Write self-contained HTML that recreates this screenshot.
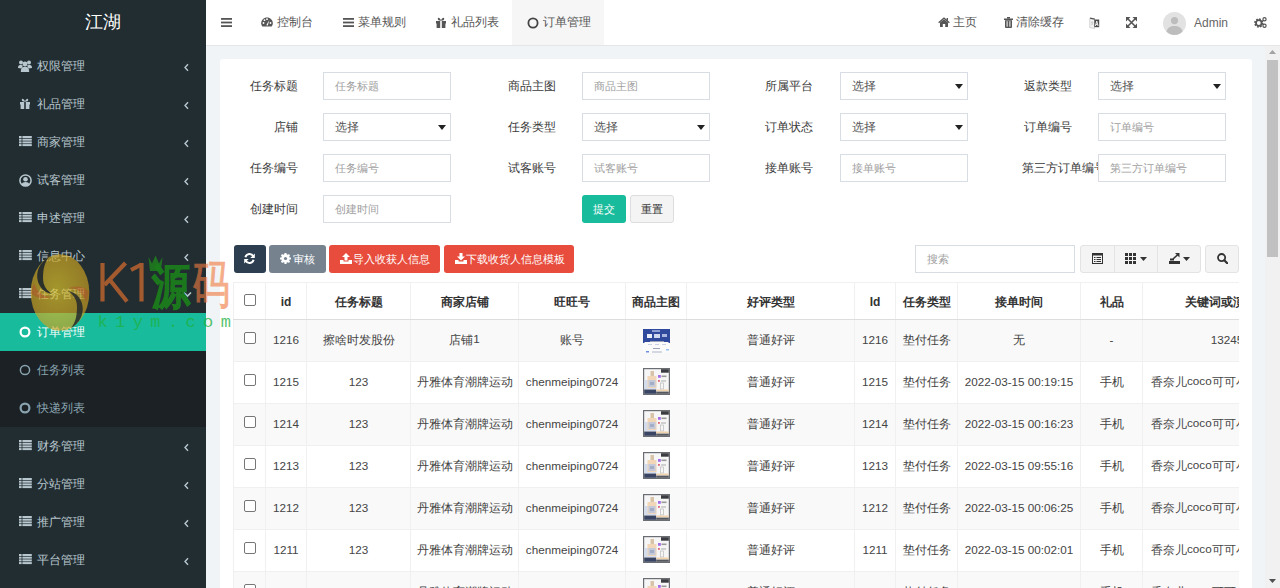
<!DOCTYPE html><html><head><meta charset="utf-8"><style>*{box-sizing:border-box;margin:0;padding:0}
html,body{width:1280px;height:588px;overflow:hidden;background:#f1f4f6;font-family:"Liberation Sans",sans-serif;font-size:12px;color:#333;position:relative}
.abs{position:absolute}
svg{display:block}
#side{position:absolute;left:0;top:0;width:206px;height:588px;background:#222d32;overflow:hidden}
#logo{position:absolute;left:0;top:0;width:206px;height:45px;line-height:45px;text-align:center;color:#fff;font-size:18px}
.mi{position:absolute;left:0;width:206px;height:38px;color:#b8c7ce;font-size:12px}
.mi .ic{position:absolute;left:19px;top:13px}
.mi .ic.ci{left:19px;top:13px}
.mi .tx{position:absolute;left:37px;top:0;line-height:38px;white-space:nowrap}
.mi .ar{position:absolute;left:183px;top:16px}
.mi .ar.dn{left:183px;top:16px}
.subwrap{position:absolute;left:0;width:206px;height:114px;background:#1b2125}
.sb2 .tx{color:#8aa4af}
.act{background:#18bc9c}
.act .tx{color:#fff}
#wm{position:absolute;left:0;top:0}
#hdr{position:absolute;left:206px;top:0;width:1074px;height:46px;background:#fff;border-bottom:1px solid #e4e6e8}
.hn{position:absolute;top:0;height:45px;line-height:45px;color:#555;font-size:12px;white-space:nowrap}
#panel{position:absolute;left:220px;top:59px;width:1032px;height:540px;background:#fff;border-radius:3px}
.lbl{position:absolute;height:28px;line-height:28px;font-size:11.7px;color:#3a3a3a;white-space:nowrap}
.inp{position:absolute;width:128px;height:28px;border:1px solid #d8dce3;background:#fff;font-size:11px;color:#a0a0a0;line-height:26px;padding-left:11px;white-space:nowrap;overflow:hidden}
.inp.sel{color:#555;font-size:12px}
.sel .cr{position:absolute;right:4px;top:11px;width:0;height:0;border-left:4px solid transparent;border-right:4px solid transparent;border-top:5px solid #222}
.btn{position:absolute;height:28px;line-height:28px;border-radius:3px;text-align:center;color:#fff;font-size:11px;white-space:nowrap}
#sb{position:absolute;left:1265px;top:46px;width:15px;height:542px;background:#f1f1f1}
#thumb{position:absolute;left:2px;top:14px;width:11px;height:197px;background:#c1c1c1}
#tbl{position:absolute;left:233px;top:282px;width:1006px;height:306px;overflow:hidden;background:#fff}
table{border-collapse:collapse;table-layout:fixed;width:1078px;font-size:12px;color:#444}
th{color:#333}
td,th{border:1px solid #f0f0f0;text-align:center;white-space:nowrap;overflow:hidden;padding:0 4px;vertical-align:middle}
th{height:37px;font-weight:bold;border-bottom:1px solid #ddd;border-top:1px solid #f0f0f0;padding-top:2px}
th .cb{position:relative;top:-3px}
td .cb{position:relative;top:-2px}
td{height:42px;font-size:11.7px;padding-bottom:2px}
td svg{margin:0 auto}
tr.g td{background:#f9f9f9}
.cb{display:inline-block;width:12px;height:12px;border:1px solid #767676;border-radius:2px;background:#fff;vertical-align:middle}

.cj{position:relative;top:1px}
td:last-child{padding:0 8px 2px}
th:last-child{padding:2px 8px 0}
</style></head><body><div id="side">
<div id="logo">江湖</div>
<div class="mi" style="top:47px"><div class="ic" style="left:18px"><svg width="14" height="12" viewBox="0 0 14 12" ><circle cx="3" cy="2.6" r="2" fill="#b8c7ce"/><circle cx="11" cy="2.6" r="2" fill="#b8c7ce"/><path d="M0 8 C0 5.5 1.2 5 3 5 C4 5 4.6 5.3 5 5.6 L3.5 8.5 Z" fill="#b8c7ce"/><path d="M14 8 C14 5.5 12.8 5 11 5 C10 5 9.4 5.3 9 5.6 L10.5 8.5 Z" fill="#b8c7ce"/><circle cx="7" cy="4" r="2.4" fill="#b8c7ce"/><path d="M2.8 12 C2.8 8 4.5 6.8 7 6.8 C9.5 6.8 11.2 8 11.2 12 Z" fill="#b8c7ce"/></svg></div><div class="tx">权限管理</div><div class="ar"><svg width="7" height="9" viewBox="0 0 7 9" ><path d="M5 1.2 L2 4.5 L5 7.8" fill="none" stroke="#b8c7ce" stroke-width="1.4"/></svg></div></div>
<div class="mi" style="top:85px"><div class="ic" style=""><svg width="12" height="11" viewBox="0 0 12 11" ><path d="M1 4h10v2.5H1z M1.6 6.5h8.8V11H1.6z" fill="#b8c7ce"/><rect x="5.2" y="3.6" width="1.6" height="7.4" fill="#222d32"/><path d="M6 3.8 C4 3.8 2.5 3 2.8 1.6 C3.1 0.2 5 0.6 6 3.6 C7 0.6 8.9 0.2 9.2 1.6 C9.5 3 8 3.8 6 3.8Z" fill="#b8c7ce"/></svg></div><div class="tx">礼品管理</div><div class="ar"><svg width="7" height="9" viewBox="0 0 7 9" ><path d="M5 1.2 L2 4.5 L5 7.8" fill="none" stroke="#b8c7ce" stroke-width="1.4"/></svg></div></div>
<div class="mi" style="top:123px"><div class="ic" style=""><svg width="13" height="11" viewBox="0 0 13 11" ><rect x="0" y="0" width="2.6" height="2" fill="#b8c7ce"/><rect x="3.4" y="0" width="9.4" height="2" fill="#b8c7ce"/><rect x="0" y="2.7" width="2.6" height="2" fill="#b8c7ce"/><rect x="3.4" y="2.7" width="9.4" height="2" fill="#b8c7ce"/><rect x="0" y="5.4" width="2.6" height="2" fill="#b8c7ce"/><rect x="3.4" y="5.4" width="9.4" height="2" fill="#b8c7ce"/><rect x="0" y="8.1" width="2.6" height="2" fill="#b8c7ce"/><rect x="3.4" y="8.1" width="9.4" height="2" fill="#b8c7ce"/></svg></div><div class="tx">商家管理</div><div class="ar"><svg width="7" height="9" viewBox="0 0 7 9" ><path d="M5 1.2 L2 4.5 L5 7.8" fill="none" stroke="#b8c7ce" stroke-width="1.4"/></svg></div></div>
<div class="mi" style="top:161px"><div class="ic" style=""><svg width="13" height="13" viewBox="0 0 13 13" ><circle cx="6.5" cy="6.5" r="5.6" fill="none" stroke="#b8c7ce" stroke-width="1.5"/><circle cx="6.5" cy="5.2" r="2.3" fill="#b8c7ce"/><path d="M2.6 10.4 C3.2 8.8 4.6 8.1 6.5 8.1 C8.4 8.1 9.8 8.8 10.4 10.4 C9.4 11.5 8 12 6.5 12 C5 12 3.6 11.5 2.6 10.4Z" fill="#b8c7ce"/></svg></div><div class="tx">试客管理</div><div class="ar"><svg width="7" height="9" viewBox="0 0 7 9" ><path d="M5 1.2 L2 4.5 L5 7.8" fill="none" stroke="#b8c7ce" stroke-width="1.4"/></svg></div></div>
<div class="mi" style="top:199px"><div class="ic" style=""><svg width="13" height="11" viewBox="0 0 13 11" ><rect x="0" y="0" width="2.6" height="2" fill="#b8c7ce"/><rect x="3.4" y="0" width="9.4" height="2" fill="#b8c7ce"/><rect x="0" y="2.7" width="2.6" height="2" fill="#b8c7ce"/><rect x="3.4" y="2.7" width="9.4" height="2" fill="#b8c7ce"/><rect x="0" y="5.4" width="2.6" height="2" fill="#b8c7ce"/><rect x="3.4" y="5.4" width="9.4" height="2" fill="#b8c7ce"/><rect x="0" y="8.1" width="2.6" height="2" fill="#b8c7ce"/><rect x="3.4" y="8.1" width="9.4" height="2" fill="#b8c7ce"/></svg></div><div class="tx">申述管理</div><div class="ar"><svg width="7" height="9" viewBox="0 0 7 9" ><path d="M5 1.2 L2 4.5 L5 7.8" fill="none" stroke="#b8c7ce" stroke-width="1.4"/></svg></div></div>
<div class="mi" style="top:237px"><div class="ic" style=""><svg width="13" height="11" viewBox="0 0 13 11" ><rect x="0" y="0" width="2.6" height="2" fill="#b8c7ce"/><rect x="3.4" y="0" width="9.4" height="2" fill="#b8c7ce"/><rect x="0" y="2.7" width="2.6" height="2" fill="#b8c7ce"/><rect x="3.4" y="2.7" width="9.4" height="2" fill="#b8c7ce"/><rect x="0" y="5.4" width="2.6" height="2" fill="#b8c7ce"/><rect x="3.4" y="5.4" width="9.4" height="2" fill="#b8c7ce"/><rect x="0" y="8.1" width="2.6" height="2" fill="#b8c7ce"/><rect x="3.4" y="8.1" width="9.4" height="2" fill="#b8c7ce"/></svg></div><div class="tx">信息中心</div><div class="ar"><svg width="7" height="9" viewBox="0 0 7 9" ><path d="M5 1.2 L2 4.5 L5 7.8" fill="none" stroke="#b8c7ce" stroke-width="1.4"/></svg></div></div>
<div class="mi" style="top:275px"><div class="ic" style=""><svg width="13" height="11" viewBox="0 0 13 11" ><rect x="0" y="0" width="2.6" height="2" fill="#b8c7ce"/><rect x="3.4" y="0" width="9.4" height="2" fill="#b8c7ce"/><rect x="0" y="2.7" width="2.6" height="2" fill="#b8c7ce"/><rect x="3.4" y="2.7" width="9.4" height="2" fill="#b8c7ce"/><rect x="0" y="5.4" width="2.6" height="2" fill="#b8c7ce"/><rect x="3.4" y="5.4" width="9.4" height="2" fill="#b8c7ce"/><rect x="0" y="8.1" width="2.6" height="2" fill="#b8c7ce"/><rect x="3.4" y="8.1" width="9.4" height="2" fill="#b8c7ce"/></svg></div><div class="tx">任务管理</div><div class="ar dn"><svg width="9" height="7" viewBox="0 0 9 7" ><path d="M1 1.5 L4.5 5 L8 1.5" fill="none" stroke="#b8c7ce" stroke-width="1.6"/></svg></div></div>
<div class="subwrap" style="top:313px">
<div class="mi act" style="top:0px"><div class="ic ci"><svg width="12" height="12" viewBox="0 0 12 12" ><circle cx="6.0" cy="6.0" r="4.4" fill="none" stroke="#fff" stroke-width="2.2"/></svg></div><div class="tx">订单管理</div></div>
<div class="mi sb2" style="top:38px"><div class="ic ci"><svg width="12" height="12" viewBox="0 0 12 12" ><circle cx="6.0" cy="6.0" r="4.6" fill="none" stroke="#8aa4af" stroke-width="1.5"/></svg></div><div class="tx">任务列表</div></div>
<div class="mi sb2" style="top:76px"><div class="ic ci"><svg width="12" height="12" viewBox="0 0 12 12" ><circle cx="6.0" cy="6.0" r="4.4" fill="none" stroke="#8aa4af" stroke-width="2.2"/></svg></div><div class="tx">快递列表</div></div>
</div>
<div class="mi" style="top:427px"><div class="ic"><svg width="13" height="11" viewBox="0 0 13 11" ><rect x="0" y="0" width="2.6" height="2" fill="#b8c7ce"/><rect x="3.4" y="0" width="9.4" height="2" fill="#b8c7ce"/><rect x="0" y="2.7" width="2.6" height="2" fill="#b8c7ce"/><rect x="3.4" y="2.7" width="9.4" height="2" fill="#b8c7ce"/><rect x="0" y="5.4" width="2.6" height="2" fill="#b8c7ce"/><rect x="3.4" y="5.4" width="9.4" height="2" fill="#b8c7ce"/><rect x="0" y="8.1" width="2.6" height="2" fill="#b8c7ce"/><rect x="3.4" y="8.1" width="9.4" height="2" fill="#b8c7ce"/></svg></div><div class="tx">财务管理</div><div class="ar"><svg width="7" height="9" viewBox="0 0 7 9" ><path d="M5 1.2 L2 4.5 L5 7.8" fill="none" stroke="#b8c7ce" stroke-width="1.4"/></svg></div></div>
<div class="mi" style="top:465px"><div class="ic"><svg width="13" height="11" viewBox="0 0 13 11" ><rect x="0" y="0" width="2.6" height="2" fill="#b8c7ce"/><rect x="3.4" y="0" width="9.4" height="2" fill="#b8c7ce"/><rect x="0" y="2.7" width="2.6" height="2" fill="#b8c7ce"/><rect x="3.4" y="2.7" width="9.4" height="2" fill="#b8c7ce"/><rect x="0" y="5.4" width="2.6" height="2" fill="#b8c7ce"/><rect x="3.4" y="5.4" width="9.4" height="2" fill="#b8c7ce"/><rect x="0" y="8.1" width="2.6" height="2" fill="#b8c7ce"/><rect x="3.4" y="8.1" width="9.4" height="2" fill="#b8c7ce"/></svg></div><div class="tx">分站管理</div><div class="ar"><svg width="7" height="9" viewBox="0 0 7 9" ><path d="M5 1.2 L2 4.5 L5 7.8" fill="none" stroke="#b8c7ce" stroke-width="1.4"/></svg></div></div>
<div class="mi" style="top:503px"><div class="ic"><svg width="13" height="11" viewBox="0 0 13 11" ><rect x="0" y="0" width="2.6" height="2" fill="#b8c7ce"/><rect x="3.4" y="0" width="9.4" height="2" fill="#b8c7ce"/><rect x="0" y="2.7" width="2.6" height="2" fill="#b8c7ce"/><rect x="3.4" y="2.7" width="9.4" height="2" fill="#b8c7ce"/><rect x="0" y="5.4" width="2.6" height="2" fill="#b8c7ce"/><rect x="3.4" y="5.4" width="9.4" height="2" fill="#b8c7ce"/><rect x="0" y="8.1" width="2.6" height="2" fill="#b8c7ce"/><rect x="3.4" y="8.1" width="9.4" height="2" fill="#b8c7ce"/></svg></div><div class="tx">推广管理</div><div class="ar"><svg width="7" height="9" viewBox="0 0 7 9" ><path d="M5 1.2 L2 4.5 L5 7.8" fill="none" stroke="#b8c7ce" stroke-width="1.4"/></svg></div></div>
<div class="mi" style="top:541px"><div class="ic"><svg width="13" height="11" viewBox="0 0 13 11" ><rect x="0" y="0" width="2.6" height="2" fill="#b8c7ce"/><rect x="3.4" y="0" width="9.4" height="2" fill="#b8c7ce"/><rect x="0" y="2.7" width="2.6" height="2" fill="#b8c7ce"/><rect x="3.4" y="2.7" width="9.4" height="2" fill="#b8c7ce"/><rect x="0" y="5.4" width="2.6" height="2" fill="#b8c7ce"/><rect x="3.4" y="5.4" width="9.4" height="2" fill="#b8c7ce"/><rect x="0" y="8.1" width="2.6" height="2" fill="#b8c7ce"/><rect x="3.4" y="8.1" width="9.4" height="2" fill="#b8c7ce"/></svg></div><div class="tx">平台管理</div><div class="ar"><svg width="7" height="9" viewBox="0 0 7 9" ><path d="M5 1.2 L2 4.5 L5 7.8" fill="none" stroke="#b8c7ce" stroke-width="1.4"/></svg></div></div>
</div>
<div id="hdr">
<div class="abs" style="left:15px;top:18px"><svg width="11" height="9" viewBox="0 0 11 9" ><rect x="0" y="0" width="11" height="1.8" fill="#555"/><rect x="0" y="3.6" width="11" height="1.8" fill="#555"/><rect x="0" y="7.2" width="11" height="1.8" fill="#555"/></svg></div>
<div class="abs" style="left:55px;top:17px"><svg width="12" height="10" viewBox="0 0 12 10" ><path d="M6 0.5 C2.7 0.5 0.2 3 0.2 6.3 C0.2 7.6 0.6 8.7 1.3 9.6 L10.7 9.6 C11.4 8.7 11.8 7.6 11.8 6.3 C11.8 3 9.3 0.5 6 0.5Z" fill="#555"/><circle cx="2.5" cy="6" r="0.9" fill="#fff"/><circle cx="3.5" cy="3.2" r="0.9" fill="#fff"/><circle cx="6" cy="2.2" r="0.9" fill="#fff"/><circle cx="9.5" cy="6" r="0.9" fill="#fff"/><path d="M5.3 8.2 L8.3 3 L6.8 8.6Z" fill="#fff"/></svg></div><div class="hn" style="left:71px">控制台</div>
<div class="abs" style="left:137px;top:18px"><svg width="11" height="9" viewBox="0 0 11 9" ><rect x="0" y="0" width="11" height="1.8" fill="#555"/><rect x="0" y="3.6" width="11" height="1.8" fill="#555"/><rect x="0" y="7.2" width="11" height="1.8" fill="#555"/></svg></div><div class="hn" style="left:152px">菜单规则</div>
<div class="abs" style="left:229px;top:17px"><svg width="12" height="11" viewBox="0 0 12 11" ><path d="M1 4h10v2.5H1z M1.6 6.5h8.8V11H1.6z" fill="#555"/><rect x="5.2" y="3.6" width="1.6" height="7.4" fill="#fff"/><path d="M6 3.8 C4 3.8 2.5 3 2.8 1.6 C3.1 0.2 5 0.6 6 3.6 C7 0.6 8.9 0.2 9.2 1.6 C9.5 3 8 3.8 6 3.8Z" fill="#555"/></svg></div><div class="hn" style="left:245px">礼品列表</div>
<div class="abs" style="left:306px;top:0;width:92px;height:45px;background:#f6f6f6"></div>
<div class="abs" style="left:321px;top:17px"><svg width="12" height="12" viewBox="0 0 12 12" ><circle cx="6.0" cy="6.0" r="4.6" fill="none" stroke="#444" stroke-width="1.8"/></svg></div><div class="hn" style="left:337px">订单管理</div>
<div class="abs" style="left:732px;top:17px"><svg width="12" height="10" viewBox="0 0 12 10" ><path d="M6 0.3 L11.8 5.3 L10.9 6.2 L6 2 L1.1 6.2 L0.2 5.3Z" fill="#555"/><path d="M2 5.5 L6 2.2 L10 5.5 V10 H7.2 V7 H4.8 V10 H2Z" fill="#555"/><rect x="8.6" y="1" width="1.4" height="2.6" fill="#555"/></svg></div><div class="hn" style="left:747px">主页</div>
<div class="abs" style="left:798px;top:17px"><svg width="9" height="11" viewBox="0 0 9 11" ><rect x="0" y="1.5" width="9" height="1.5" fill="#555"/><rect x="3" y="0" width="3" height="1.6" fill="#555"/><path d="M1 3.2 H8 V10 Q8 11 7 11 H2 Q1 11 1 10Z" fill="#555"/><rect x="2.6" y="4.2" width="1" height="5.5" fill="#fff"/><rect x="5.4" y="4.2" width="1" height="5.5" fill="#fff"/></svg></div><div class="hn" style="left:810px">清除缓存</div>
<div class="abs" style="left:883px;top:17px"><svg width="11" height="12" viewBox="0 0 11 12" ><path d="M0.8 1.5 L5.5 2.3 V11.5 L0.8 10.6Z" fill="#f4f4f4" stroke="#c9c9c9" stroke-width="0.8"/><path d="M1 1.2 L5.8 2.2" stroke="#555" stroke-width="1.2"/><path d="M5.3 2.5 H10.2 V10.2 H5.3Z" fill="#4a4a4a"/><path d="M6.4 9 L7.75 4 L9.1 9 M6.9 7.4 H8.6" stroke="#fff" stroke-width="0.9" fill="none"/><path d="M2 5 H4.3 M2.6 5 C2.9 6.8 3.5 7.6 4.3 8.2 M3.8 5 C3.5 6.8 2.9 7.6 2 8.2" stroke="#bbb" stroke-width="0.6" fill="none"/></svg></div>
<div class="abs" style="left:920px;top:17px"><svg width="11" height="11" viewBox="0 0 11 11" ><path d="M1.8 1.8 L9.2 9.2 M9.2 1.8 L1.8 9.2" stroke="#555" stroke-width="1.6"/><path d="M0 0 H4.5 L0 4.5Z M11 0 V4.5 L6.5 0Z M0 11 V6.5 L4.5 11Z M11 11 H6.5 L11 6.5Z" fill="#555"/></svg></div>
<div class="abs" style="left:957px;top:12px"><svg width="23" height="23" viewBox="0 0 23 23" ><circle cx="11.5" cy="11.5" r="11.5" fill="#e2e2e2"/><circle cx="11.5" cy="8.6" r="3.6" fill="#bdbdbd"/><path d="M3.5 19.5 C4.5 15.5 7.5 14 11.5 14 C15.5 14 18.5 15.5 19.5 19.5 C17.5 21.7 14.7 23 11.5 23 C8.3 23 5.5 21.7 3.5 19.5Z" fill="#bdbdbd"/></svg></div><div class="hn" style="left:988px;top:1px;color:#666;font-size:12px">Admin</div>
<div class="abs" style="left:1048px;top:17px"><svg width="13" height="11" viewBox="0 0 13 11" ><circle cx="4.8" cy="6" r="3.6" fill="none" stroke="#555" stroke-width="2.2" stroke-dasharray="1.6 1.2"/><circle cx="4.8" cy="6" r="2.8" fill="none" stroke="#555" stroke-width="1.8"/><circle cx="10.5" cy="2.2" r="1.6" fill="none" stroke="#555" stroke-width="1.2"/><circle cx="10.5" cy="8.8" r="1.6" fill="none" stroke="#555" stroke-width="1.2"/></svg></div>
</div>
<div id="sb"><div class="abs" style="left:4px;top:4px;transform:rotate(180deg)"><svg width="7" height="4" viewBox="0 0 7 4" ><path d="M0 0 H7 L3.5 4Z" fill="#a3a3a3"/></svg></div><div id="thumb"></div><div class="abs" style="left:4px;top:533px"><svg width="7" height="4" viewBox="0 0 7 4" ><path d="M0 0 H7 L3.5 4Z" fill="#505050"/></svg></div></div>
<div id="panel"></div>
<div class="lbl" style="right:982px;top:72px">任务标题</div>
<div class="inp" style="left:323px;top:72px">任务标题</div>
<div class="lbl" style="right:724px;top:72px">商品主图</div>
<div class="inp" style="left:582px;top:72px">商品主图</div>
<div class="lbl" style="right:467px;top:72px">所属平台</div>
<div class="inp sel" style="left:840px;top:72px">选择<span class="cr"></span></div>
<div class="lbl" style="right:208px;top:72px">返款类型</div>
<div class="inp sel" style="left:1098px;top:72px">选择<span class="cr"></span></div>
<div class="lbl" style="right:982px;top:113px">店铺</div>
<div class="inp sel" style="left:323px;top:113px">选择<span class="cr"></span></div>
<div class="lbl" style="right:724px;top:113px">任务类型</div>
<div class="inp sel" style="left:582px;top:113px">选择<span class="cr"></span></div>
<div class="lbl" style="right:467px;top:113px">订单状态</div>
<div class="inp sel" style="left:840px;top:113px">选择<span class="cr"></span></div>
<div class="lbl" style="right:208px;top:113px">订单编号</div>
<div class="inp" style="left:1098px;top:113px">订单编号</div>
<div class="lbl" style="right:982px;top:154px">任务编号</div>
<div class="inp" style="left:323px;top:154px">任务编号</div>
<div class="lbl" style="right:724px;top:154px">试客账号</div>
<div class="inp" style="left:582px;top:154px">试客账号</div>
<div class="lbl" style="right:467px;top:154px">接单账号</div>
<div class="inp" style="left:840px;top:154px">接单账号</div>
<div class="lbl" style="left:1022px;top:154px">第三方订单编号</div>
<div class="inp" style="left:1098px;top:154px">第三方订单编号</div>
<div class="lbl" style="right:982px;top:195px">创建时间</div>
<div class="inp" style="left:323px;top:195px">创建时间</div>
<div class="btn" style="left:582px;top:195px;width:44px;background:#18bc9c">提交</div>
<div class="btn" style="left:630px;top:195px;width:44px;background:#f4f4f4;border:1px solid #ddd;color:#333;line-height:26px">重置</div>
<div class="btn" style="left:234px;top:245px;width:32px;background:#2c3e50"><div class="abs" style="left:10px;top:8px"><svg width="11" height="11" viewBox="0 0 11 11" ><path d="M9.3 3.2 A4.3 4.3 0 0 0 1.4 4.3" fill="none" stroke="#fff" stroke-width="2"/><path d="M10.8 0.5 V5 H6.3Z" fill="#fff"/><path d="M1.7 7.8 A4.3 4.3 0 0 0 9.6 6.7" fill="none" stroke="#fff" stroke-width="2"/><path d="M0.2 10.5 V6 H4.7Z" fill="#fff"/></svg></div></div>
<div class="btn" style="left:269px;top:245px;width:57px;background:#76838f"><div class="abs" style="left:11px;top:8px"><svg width="11" height="11" viewBox="0 0 11 11" ><circle cx="9.80" cy="5.50" r="1.3" fill="#fff"/><circle cx="8.54" cy="8.54" r="1.3" fill="#fff"/><circle cx="5.50" cy="9.80" r="1.3" fill="#fff"/><circle cx="2.46" cy="8.54" r="1.3" fill="#fff"/><circle cx="1.20" cy="5.50" r="1.3" fill="#fff"/><circle cx="2.46" cy="2.46" r="1.3" fill="#fff"/><circle cx="5.50" cy="1.20" r="1.3" fill="#fff"/><circle cx="8.54" cy="2.46" r="1.3" fill="#fff"/><circle cx="5.5" cy="5.5" r="3.9" fill="#fff"/><circle cx="5.5" cy="5.5" r="1.6" fill="#76838f"/></svg></div><span class="abs" style="left:24px;top:0">审核</span></div>
<div class="btn" style="left:329px;top:245px;width:111px;background:#e74c3c"><div class="abs" style="left:11px;top:8px"><svg width="12" height="11" viewBox="0 0 12 11" ><path d="M6 0 L10 4 H7.5 V7.5 H4.5 V4 H2Z" fill="#fff"/><path d="M0 7 H3.5 V8.5 H8.5 V7 H12 V11 H0Z" fill="#fff"/></svg></div><span class="abs" style="left:24px;top:0">导入收获人信息</span></div>
<div class="btn" style="left:444px;top:245px;width:130px;background:#e74c3c"><div class="abs" style="left:11px;top:8px"><svg width="12" height="11" viewBox="0 0 12 11" ><path d="M4.5 0 H7.5 V3.5 H10 L6 7.5 L2 3.5 H4.5Z" fill="#fff"/><path d="M0 7 H3.5 V8.5 H8.5 V7 H12 V11 H0Z" fill="#fff"/></svg></div><span class="abs" style="left:22px;top:0">下载收货人信息模板</span></div>
<div class="inp" style="left:915px;top:245px;width:160px;padding-left:11px">搜索</div>
<div class="btn grp" style="left:1080px;top:245px;width:121px;background:#f4f4f4;border:1px solid #e3e3e3"><div class="abs" style="left:11px;top:7px"><svg width="11" height="11" viewBox="0 0 11 11" ><rect x="0.5" y="0.5" width="10" height="10" fill="none" stroke="#333" stroke-width="1"/><rect x="0.5" y="0.5" width="10" height="2" fill="#333"/><rect x="2" y="4" width="1.5" height="1" fill="#333"/><rect x="4.5" y="4" width="4.5" height="1" fill="#333"/><rect x="2" y="6" width="1.5" height="1" fill="#333"/><rect x="4.5" y="6" width="4.5" height="1" fill="#333"/><rect x="2" y="8" width="1.5" height="1" fill="#333"/><rect x="4.5" y="8" width="4.5" height="1" fill="#333"/></svg></div><div class="abs" style="left:33px;top:0;width:1px;height:26px;background:#e3e3e3"></div><div class="abs" style="left:44px;top:7px"><svg width="11" height="11" viewBox="0 0 11 11" ><rect x="0" y="0" width="3" height="3" fill="#333"/><rect x="0" y="4" width="3" height="3" fill="#333"/><rect x="0" y="8" width="3" height="3" fill="#333"/><rect x="4" y="0" width="3" height="3" fill="#333"/><rect x="4" y="4" width="3" height="3" fill="#333"/><rect x="4" y="8" width="3" height="3" fill="#333"/><rect x="8" y="0" width="3" height="3" fill="#333"/><rect x="8" y="4" width="3" height="3" fill="#333"/><rect x="8" y="8" width="3" height="3" fill="#333"/></svg></div><div class="abs" style="left:59px;top:11px"><svg width="7" height="4" viewBox="0 0 7 4" ><path d="M0 0 H7 L3.5 4Z" fill="#333"/></svg></div><div class="abs" style="left:76px;top:0;width:1px;height:26px;background:#e3e3e3"></div><div class="abs" style="left:88px;top:7px"><svg width="11" height="11" viewBox="0 0 11 11" ><rect x="0" y="8" width="11" height="3" fill="#333"/><path d="M1 7.5 L1 5.5 L5 5.5 L5 7.5Z" fill="#333"/><path d="M4 6 L9 1.5" stroke="#333" stroke-width="1.6"/><path d="M6 0 H10.5 V4.5Z" fill="#333"/></svg></div><div class="abs" style="left:102px;top:11px"><svg width="7" height="4" viewBox="0 0 7 4" ><path d="M0 0 H7 L3.5 4Z" fill="#333"/></svg></div></div>
<div class="btn" style="left:1205px;top:245px;width:34px;background:#f4f4f4;border:1px solid #e3e3e3"><div class="abs" style="left:11px;top:7px"><svg width="11" height="11" viewBox="0 0 11 11" ><circle cx="4.6" cy="4.6" r="3.6" fill="none" stroke="#333" stroke-width="1.8"/><path d="M7.3 7.3 L10.3 10.3" stroke="#333" stroke-width="2.2" stroke-linecap="round"/></svg></div></div>
<div id="tbl"><table><colgroup><col style="width:32px"><col style="width:41px"><col style="width:104px"><col style="width:108px"><col style="width:107px"><col style="width:61px"><col style="width:168px"><col style="width:41px"><col style="width:62px"><col style="width:123px"><col style="width:62px"><col style="width:169px"></colgroup>
<tr><th><span class="cb"></span></th><th>id</th><th>任务标题</th><th>商家店铺</th><th>旺旺号</th><th>商品主图</th><th>好评类型</th><th>Id</th><th>任务类型</th><th>接单时间</th><th>礼品</th><th>关键词或演示图</th></tr>
<tr class="g"><td><span class="cb"></span></td><td>1216</td><td><span class="cj">擦啥时发股份</span></td><td><span class="cj">店铺</span>1</td><td><span class="cj">账号</span></td><td><svg width="27" height="27" viewBox="0 0 27 27"><rect width="27" height="27" fill="#fbfbfc"/><rect x="0" y="3" width="27" height="13" fill="#2f4a9c"/><rect x="0" y="13" width="1.5" height="4" fill="#2f4a9c"/><rect x="25.5" y="13" width="1.5" height="4" fill="#2f4a9c"/><rect x="4" y="8" width="5" height="4" fill="#e9edf7"/><rect x="11" y="8" width="6" height="4" fill="#cfd8ee"/><rect x="19" y="8" width="5" height="3" fill="#aab8e0"/><rect x="9" y="4" width="8" height="2" fill="#8d9fd4"/><rect x="7" y="15" width="14" height="1" fill="#9aa3b8"/><rect x="5" y="18" width="4" height="1" fill="#c9d0e6"/><rect x="12" y="18" width="4" height="1" fill="#c9d0e6"/><rect x="19" y="18" width="4" height="1" fill="#c9d0e6"/><rect x="10" y="22" width="7" height="1" fill="#9aa3b8"/><rect x="3" y="25" width="3" height="1.5" fill="#6d8fe0"/><rect x="9" y="25.5" width="10" height="1" fill="#b0b6c4"/><rect x="23" y="23" width="3" height="1.5" fill="#9cc0ee"/></svg></td><td><span class="cj">普通好评</span></td><td>1216</td><td><span class="cj">垫付任务</span></td><td><span class="cj">无</span></td><td>-</td><td>13245</td></tr>
<tr class=""><td><span class="cb"></span></td><td>1215</td><td>123</td><td><span class="cj">丹雅体育潮牌运动</span></td><td>chenmeiping0724</td><td><svg width="27" height="27" viewBox="0 0 27 27"><rect width="27" height="27" fill="#6a6d72"/><rect x="1.2" y="1.2" width="24.6" height="24.6" fill="#f6f6f7"/><rect x="1.2" y="12" width="12" height="9" fill="#d3dced"/><rect x="7.5" y="3" width="3.5" height="5" fill="#d8c3a8"/><rect x="4.5" y="8" width="9" height="12" fill="#f1d6b8"/><rect x="5.5" y="12" width="7" height="7" fill="#c3c9db"/><rect x="7" y="14" width="4" height="3" fill="#a3adc6"/><rect x="18" y="1.2" width="7.8" height="3.5" fill="#3a3c41"/><rect x="15" y="7" width="2.8" height="2.8" fill="#a66be6"/><rect x="18.5" y="7.5" width="5" height="1.6" fill="#999"/><rect x="15" y="12" width="1.8" height="1.8" fill="#e06070"/><rect x="18" y="12.5" width="5" height="1" fill="#aaa"/><rect x="17.5" y="15" width="3" height="6" fill="none" stroke="#bbb" stroke-width="0.7"/><rect x="1.2" y="21.5" width="12" height="4.3" fill="#394563"/><rect x="13.2" y="21.5" width="12.6" height="1.8" fill="#f0d2ab"/><rect x="13.2" y="23.6" width="12.6" height="2.2" fill="#55585e"/></svg></td><td><span class="cj">普通好评</span></td><td>1215</td><td><span class="cj">垫付任务</span></td><td>2022-03-15 00:19:15</td><td><span class="cj">手机</span></td><td><span class="cj">香奈儿</span>coco<span class="cj">可可小姐淡香水精华</span></td></tr>
<tr class="g"><td><span class="cb"></span></td><td>1214</td><td>123</td><td><span class="cj">丹雅体育潮牌运动</span></td><td>chenmeiping0724</td><td><svg width="27" height="27" viewBox="0 0 27 27"><rect width="27" height="27" fill="#6a6d72"/><rect x="1.2" y="1.2" width="24.6" height="24.6" fill="#f6f6f7"/><rect x="1.2" y="12" width="12" height="9" fill="#d3dced"/><rect x="7.5" y="3" width="3.5" height="5" fill="#d8c3a8"/><rect x="4.5" y="8" width="9" height="12" fill="#f1d6b8"/><rect x="5.5" y="12" width="7" height="7" fill="#c3c9db"/><rect x="7" y="14" width="4" height="3" fill="#a3adc6"/><rect x="18" y="1.2" width="7.8" height="3.5" fill="#3a3c41"/><rect x="15" y="7" width="2.8" height="2.8" fill="#a66be6"/><rect x="18.5" y="7.5" width="5" height="1.6" fill="#999"/><rect x="15" y="12" width="1.8" height="1.8" fill="#e06070"/><rect x="18" y="12.5" width="5" height="1" fill="#aaa"/><rect x="17.5" y="15" width="3" height="6" fill="none" stroke="#bbb" stroke-width="0.7"/><rect x="1.2" y="21.5" width="12" height="4.3" fill="#394563"/><rect x="13.2" y="21.5" width="12.6" height="1.8" fill="#f0d2ab"/><rect x="13.2" y="23.6" width="12.6" height="2.2" fill="#55585e"/></svg></td><td><span class="cj">普通好评</span></td><td>1214</td><td><span class="cj">垫付任务</span></td><td>2022-03-15 00:16:23</td><td><span class="cj">手机</span></td><td><span class="cj">香奈儿</span>coco<span class="cj">可可小姐淡香水精华</span></td></tr>
<tr class=""><td><span class="cb"></span></td><td>1213</td><td>123</td><td><span class="cj">丹雅体育潮牌运动</span></td><td>chenmeiping0724</td><td><svg width="27" height="27" viewBox="0 0 27 27"><rect width="27" height="27" fill="#6a6d72"/><rect x="1.2" y="1.2" width="24.6" height="24.6" fill="#f6f6f7"/><rect x="1.2" y="12" width="12" height="9" fill="#d3dced"/><rect x="7.5" y="3" width="3.5" height="5" fill="#d8c3a8"/><rect x="4.5" y="8" width="9" height="12" fill="#f1d6b8"/><rect x="5.5" y="12" width="7" height="7" fill="#c3c9db"/><rect x="7" y="14" width="4" height="3" fill="#a3adc6"/><rect x="18" y="1.2" width="7.8" height="3.5" fill="#3a3c41"/><rect x="15" y="7" width="2.8" height="2.8" fill="#a66be6"/><rect x="18.5" y="7.5" width="5" height="1.6" fill="#999"/><rect x="15" y="12" width="1.8" height="1.8" fill="#e06070"/><rect x="18" y="12.5" width="5" height="1" fill="#aaa"/><rect x="17.5" y="15" width="3" height="6" fill="none" stroke="#bbb" stroke-width="0.7"/><rect x="1.2" y="21.5" width="12" height="4.3" fill="#394563"/><rect x="13.2" y="21.5" width="12.6" height="1.8" fill="#f0d2ab"/><rect x="13.2" y="23.6" width="12.6" height="2.2" fill="#55585e"/></svg></td><td><span class="cj">普通好评</span></td><td>1213</td><td><span class="cj">垫付任务</span></td><td>2022-03-15 09:55:16</td><td><span class="cj">手机</span></td><td><span class="cj">香奈儿</span>coco<span class="cj">可可小姐淡香水精华</span></td></tr>
<tr class="g"><td><span class="cb"></span></td><td>1212</td><td>123</td><td><span class="cj">丹雅体育潮牌运动</span></td><td>chenmeiping0724</td><td><svg width="27" height="27" viewBox="0 0 27 27"><rect width="27" height="27" fill="#6a6d72"/><rect x="1.2" y="1.2" width="24.6" height="24.6" fill="#f6f6f7"/><rect x="1.2" y="12" width="12" height="9" fill="#d3dced"/><rect x="7.5" y="3" width="3.5" height="5" fill="#d8c3a8"/><rect x="4.5" y="8" width="9" height="12" fill="#f1d6b8"/><rect x="5.5" y="12" width="7" height="7" fill="#c3c9db"/><rect x="7" y="14" width="4" height="3" fill="#a3adc6"/><rect x="18" y="1.2" width="7.8" height="3.5" fill="#3a3c41"/><rect x="15" y="7" width="2.8" height="2.8" fill="#a66be6"/><rect x="18.5" y="7.5" width="5" height="1.6" fill="#999"/><rect x="15" y="12" width="1.8" height="1.8" fill="#e06070"/><rect x="18" y="12.5" width="5" height="1" fill="#aaa"/><rect x="17.5" y="15" width="3" height="6" fill="none" stroke="#bbb" stroke-width="0.7"/><rect x="1.2" y="21.5" width="12" height="4.3" fill="#394563"/><rect x="13.2" y="21.5" width="12.6" height="1.8" fill="#f0d2ab"/><rect x="13.2" y="23.6" width="12.6" height="2.2" fill="#55585e"/></svg></td><td><span class="cj">普通好评</span></td><td>1212</td><td><span class="cj">垫付任务</span></td><td>2022-03-15 00:06:25</td><td><span class="cj">手机</span></td><td><span class="cj">香奈儿</span>coco<span class="cj">可可小姐淡香水精华</span></td></tr>
<tr class=""><td><span class="cb"></span></td><td>1211</td><td>123</td><td><span class="cj">丹雅体育潮牌运动</span></td><td>chenmeiping0724</td><td><svg width="27" height="27" viewBox="0 0 27 27"><rect width="27" height="27" fill="#6a6d72"/><rect x="1.2" y="1.2" width="24.6" height="24.6" fill="#f6f6f7"/><rect x="1.2" y="12" width="12" height="9" fill="#d3dced"/><rect x="7.5" y="3" width="3.5" height="5" fill="#d8c3a8"/><rect x="4.5" y="8" width="9" height="12" fill="#f1d6b8"/><rect x="5.5" y="12" width="7" height="7" fill="#c3c9db"/><rect x="7" y="14" width="4" height="3" fill="#a3adc6"/><rect x="18" y="1.2" width="7.8" height="3.5" fill="#3a3c41"/><rect x="15" y="7" width="2.8" height="2.8" fill="#a66be6"/><rect x="18.5" y="7.5" width="5" height="1.6" fill="#999"/><rect x="15" y="12" width="1.8" height="1.8" fill="#e06070"/><rect x="18" y="12.5" width="5" height="1" fill="#aaa"/><rect x="17.5" y="15" width="3" height="6" fill="none" stroke="#bbb" stroke-width="0.7"/><rect x="1.2" y="21.5" width="12" height="4.3" fill="#394563"/><rect x="13.2" y="21.5" width="12.6" height="1.8" fill="#f0d2ab"/><rect x="13.2" y="23.6" width="12.6" height="2.2" fill="#55585e"/></svg></td><td><span class="cj">普通好评</span></td><td>1211</td><td><span class="cj">垫付任务</span></td><td>2022-03-15 00:02:01</td><td><span class="cj">手机</span></td><td><span class="cj">香奈儿</span>coco<span class="cj">可可小姐淡香水精华</span></td></tr>
<tr class="g"><td><span class="cb"></span></td><td>1210</td><td>123</td><td><span class="cj">丹雅体育潮牌运动</span></td><td>chenmeiping0724</td><td><svg width="27" height="27" viewBox="0 0 27 27"><rect width="27" height="27" fill="#6a6d72"/><rect x="1.2" y="1.2" width="24.6" height="24.6" fill="#f6f6f7"/><rect x="1.2" y="12" width="12" height="9" fill="#d3dced"/><rect x="7.5" y="3" width="3.5" height="5" fill="#d8c3a8"/><rect x="4.5" y="8" width="9" height="12" fill="#f1d6b8"/><rect x="5.5" y="12" width="7" height="7" fill="#c3c9db"/><rect x="7" y="14" width="4" height="3" fill="#a3adc6"/><rect x="18" y="1.2" width="7.8" height="3.5" fill="#3a3c41"/><rect x="15" y="7" width="2.8" height="2.8" fill="#a66be6"/><rect x="18.5" y="7.5" width="5" height="1.6" fill="#999"/><rect x="15" y="12" width="1.8" height="1.8" fill="#e06070"/><rect x="18" y="12.5" width="5" height="1" fill="#aaa"/><rect x="17.5" y="15" width="3" height="6" fill="none" stroke="#bbb" stroke-width="0.7"/><rect x="1.2" y="21.5" width="12" height="4.3" fill="#394563"/><rect x="13.2" y="21.5" width="12.6" height="1.8" fill="#f0d2ab"/><rect x="13.2" y="23.6" width="12.6" height="2.2" fill="#55585e"/></svg></td><td><span class="cj">普通好评</span></td><td>1210</td><td><span class="cj">垫付任务</span></td><td>2022-03-15 00:00:11</td><td><span class="cj">手机</span></td><td><span class="cj">香奈儿</span>coco<span class="cj">可可小姐淡香水精华</span></td></tr>
</table></div>
<svg id="wm" width="240" height="345" viewBox="0 0 240 345" style="position:absolute;left:0;top:0"><defs><radialGradient id="eg" cx="0.45" cy="0.45" r="0.65"><stop offset="0" stop-color="#e6cc2a"/><stop offset="1" stop-color="#c8981e"/></radialGradient></defs><ellipse cx="60" cy="292.5" rx="29.3" ry="38.3" fill="url(#eg)" opacity="0.66"/><path d="M34 283 C37 292 44 298 52 296 C46 300 36 299 31 293Z" fill="#c03030" opacity="0.3"/><path d="M86 302 C83 293 76 287 68 289 C74 285 84 286 89 292Z" fill="#c03030" opacity="0.3"/><path d="M49 257 C38 263 34 276 40 286 C43 291 47 293 52 294 C46 290 43 285 43 278 C43 268 45 262 49 257Z" fill="#23292c" opacity="0.92"/><path d="M71 328 C82 322 86 309 80 299 C77 294 73 292 68 291 C74 295 77 300 77 307 C77 317 75 323 71 328Z" fill="#23292c" opacity="0.85"/><g fill="none" stroke="#e0702e" stroke-width="4.2" opacity="0.68"><path d="M102.5 263 V301.5"/><path d="M125.5 263 L104.5 285"/><path d="M109.5 279.5 L127 301.5"/><path d="M141.5 263 V301.5"/><path d="M131 270 L141.5 264.5"/></g><path d="M148.5 257 L152 263.5 L155.5 255.5 L159 263.5 L162.5 257 L161 271 L150 271Z" fill="#1e7a1e" opacity="0.9"/><text x="0" y="0" font-size="40" font-weight="bold" fill="#1b7d1b" stroke="#1b7d1b" stroke-width="0.8" opacity="0.95" transform="translate(151.5,303) scale(0.95,1.2)" style="font-family:'Liberation Sans',sans-serif">源</text><text x="0" y="0" font-size="40" fill="#f07a40" stroke="#f07a40" stroke-width="0.9" opacity="0.62" transform="translate(193,302) scale(0.92,1.28)" style="font-family:'Liberation Sans',sans-serif">码</text><text x="97.5" y="327" font-size="17" fill="#20b040" opacity="0.75" letter-spacing="7.4" style="font-family:'Liberation Mono',monospace">k1ym.com</text></svg></body></html>
